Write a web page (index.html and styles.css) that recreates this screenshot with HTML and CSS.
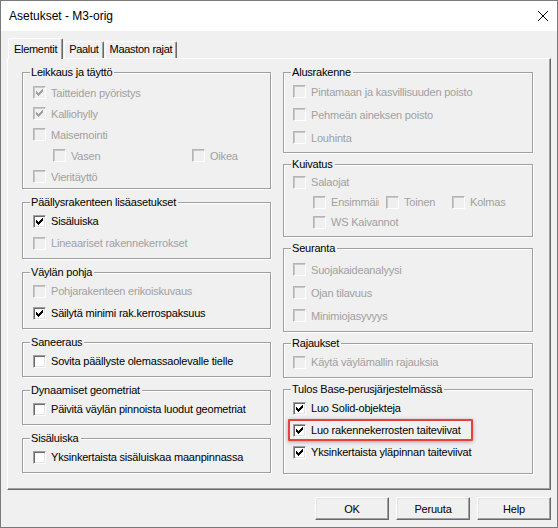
FILE: index.html
```html
<!DOCTYPE html>
<html lang="fi">
<head>
  <meta charset="UTF-8" />
  <title>Asetukset - M3-orig</title>
  <link rel="stylesheet" href="styles.css">
</head>
<body>

  <div class="window">

    <!-- Title bar -->
    <div class="titlebar">
      <span class="title">Asetukset - M3-orig</span>
      <svg class="close" viewBox="0 0 10 10"><path d="M0 0L10 10M10 0L0 10" /></svg>
    </div>

    <div class="content">

      <!-- Tabs -->
      <div class="tabs">
        <div class="tab on">Elementit</div>
        <div class="tab">Paalut</div>
        <div class="tab">Maaston rajat</div>
      </div>

      <div class="panel">

        <!-- Left column -->
        <div class="col col-left">

          <div class="group g-cut">
            <span class="legend">Leikkaus ja täyttö</span>
            <div class="row"><span class="check off checked"><span class="box"><svg viewBox="0 0 7 7"><path d="M6 0h1v1h-1zM5 1h2v1h-2zM0 2h1v1h-1zM4 2h3v1h-3zM0 3h2v1h-2zM3 3h3v1h-3zM0 4h5v1h-5zM1 5h3v1h-3zM2 6h1v1h-1z"/></svg></span>Taitteiden pyöristys</span></div>
            <div class="row"><span class="check off checked"><span class="box"><svg viewBox="0 0 7 7"><path d="M6 0h1v1h-1zM5 1h2v1h-2zM0 2h1v1h-1zM4 2h3v1h-3zM0 3h2v1h-2zM3 3h3v1h-3zM0 4h5v1h-5zM1 5h3v1h-3zM2 6h1v1h-1z"/></svg></span>Kalliohylly</span></div>
            <div class="row"><span class="check off"><span class="box"></span>Maisemointi</span></div>
            <div class="row split pair">
              <span class="check off"><span class="box"></span>Vasen</span>
              <span class="check off"><span class="box"></span>Oikea</span>
            </div>
            <div class="row"><span class="check off"><span class="box"></span>Vieritäyttö</span></div>
          </div>

          <div class="group">
            <span class="legend">Päällysrakenteen lisäasetukset</span>
            <div class="row"><span class="check checked"><span class="box"><svg viewBox="0 0 7 7"><path d="M6 0h1v1h-1zM5 1h2v1h-2zM0 2h1v1h-1zM4 2h3v1h-3zM0 3h2v1h-2zM3 3h3v1h-3zM0 4h5v1h-5zM1 5h3v1h-3zM2 6h1v1h-1z"/></svg></span>Sisäluiska</span></div>
            <div class="row"><span class="check off"><span class="box"></span>Lineaariset rakennekerrokset</span></div>
          </div>

          <div class="group">
            <span class="legend">Väylän pohja</span>
            <div class="row"><span class="check off"><span class="box"></span>Pohjarakenteen erikoiskuvaus</span></div>
            <div class="row"><span class="check checked"><span class="box"><svg viewBox="0 0 7 7"><path d="M6 0h1v1h-1zM5 1h2v1h-2zM0 2h1v1h-1zM4 2h3v1h-3zM0 3h2v1h-2zM3 3h3v1h-3zM0 4h5v1h-5zM1 5h3v1h-3zM2 6h1v1h-1z"/></svg></span>Säilytä minimi rak.kerrospaksuus</span></div>
          </div>

          <div class="group">
            <span class="legend">Saneeraus</span>
            <div class="row"><span class="check"><span class="box"></span>Sovita päällyste olemassaolevalle tielle</span></div>
          </div>

          <div class="group">
            <span class="legend">Dynaamiset geometriat</span>
            <div class="row"><span class="check"><span class="box"></span>Päivitä väylän pinnoista luodut geometriat</span></div>
          </div>

          <div class="group">
            <span class="legend">Sisäluiska</span>
            <div class="row"><span class="check"><span class="box"></span>Yksinkertaista sisäluiskaa maanpinnassa</span></div>
          </div>

        </div>

        <!-- Right column -->
        <div class="col col-right">

          <div class="group g-base">
            <span class="legend">Alusrakenne</span>
            <div class="row"><span class="check off"><span class="box"></span>Pintamaan ja kasvillisuuden poisto</span></div>
            <div class="row"><span class="check off"><span class="box"></span>Pehmeän aineksen poisto</span></div>
            <div class="row"><span class="check off"><span class="box"></span>Louhinta</span></div>
          </div>

          <div class="group g-drain">
            <span class="legend">Kuivatus</span>
            <div class="row"><span class="check off"><span class="box"></span>Salaojat</span></div>
            <div class="row split trio">
              <span class="check off"><span class="box"></span><span class="clip">Ensimmäinen</span></span>
              <span class="check off"><span class="box"></span>Toinen</span>
              <span class="check off"><span class="box"></span>Kolmas</span>
            </div>
            <div class="row split"><span class="check off"><span class="box"></span>WS Kaivannot</span></div>
          </div>

          <div class="group g-watch">
            <span class="legend">Seuranta</span>
            <div class="row"><span class="check off"><span class="box"></span>Suojakaideanalyysi</span></div>
            <div class="row"><span class="check off"><span class="box"></span>Ojan tilavuus</span></div>
            <div class="row"><span class="check off"><span class="box"></span>Minimiojasyvyys</span></div>
          </div>

          <div class="group">
            <span class="legend">Rajaukset</span>
            <div class="row"><span class="check off"><span class="box"></span>Käytä väylämallin rajauksia</span></div>
          </div>

          <div class="group g-out">
            <span class="legend">Tulos Base-perusjärjestelmässä</span>
            <div class="row"><span class="check checked"><span class="box"><svg viewBox="0 0 7 7"><path d="M6 0h1v1h-1zM5 1h2v1h-2zM0 2h1v1h-1zM4 2h3v1h-3zM0 3h2v1h-2zM3 3h3v1h-3zM0 4h5v1h-5zM1 5h3v1h-3zM2 6h1v1h-1z"/></svg></span>Luo Solid-objekteja</span></div>
            <div class="row marked">
              <span class="check checked"><span class="box"><svg viewBox="0 0 7 7"><path d="M6 0h1v1h-1zM5 1h2v1h-2zM0 2h1v1h-1zM4 2h3v1h-3zM0 3h2v1h-2zM3 3h3v1h-3zM0 4h5v1h-5zM1 5h3v1h-3zM2 6h1v1h-1z"/></svg></span>Luo rakennekerrosten taiteviivat</span>
              <span class="highlight"></span>
            </div>
            <div class="row"><span class="check checked"><span class="box"><svg viewBox="0 0 7 7"><path d="M6 0h1v1h-1zM5 1h2v1h-2zM0 2h1v1h-1zM4 2h3v1h-3zM0 3h2v1h-2zM3 3h3v1h-3zM0 4h5v1h-5zM1 5h3v1h-3zM2 6h1v1h-1z"/></svg></span>Yksinkertaista yläpinnan taiteviivat</span></div>
          </div>

        </div>
      </div>

      <!-- Dialog buttons -->
      <div class="buttons">
        <button class="btn">OK</button>
        <button class="btn">Peruuta</button>
        <button class="btn">Help</button>
      </div>

    </div>
  </div>

</body>
</html>
```

FILE: styles.css
```css
body {
  margin: 0;
  font-family: "Liberation Sans", Arial, sans-serif;
  font-size: 11px;
  letter-spacing: -0.2px;
  color: #000;
  background: #fff;
}
.window {
  width: 558px;
  height: 528px;
  box-sizing: border-box;
  border: 1px solid #7a7a7a;
  background: #f0f0f0;
}
.titlebar {
  height: 30px;
  background: #fff;
  display: flex;
  align-items: center;
  justify-content: space-between;
  padding: 0 9px 0 8px;
}
.title {
  font-size: 12px;
  letter-spacing: 0;
}
.close {
  width: 10px;
  height: 10px;
  stroke: #000;
  stroke-width: 1;
  fill: none;
}
.content {
  padding: 7px 6px 0;
}

/* Tabs */
.tabs {
  display: flex;
  align-items: flex-end;
  height: 20px;
  padding-left: 1px;
}
.tab {
  height: 17px;
  box-sizing: border-box;
  padding: 0 4px;
  line-height: 15px;
  letter-spacing: -0.3px;
  border: 1px solid;
  border-bottom: 0;
  border-color: #fff #696969 transparent #fff;
  border-radius: 2px 2px 0 0;
  box-shadow: inset -1px 0 0 #a0a0a0;
  margin-left: 1px;
  white-space: nowrap;
}
.tab.on {
  height: 21px;
  margin: 0 0 -1px 0;
  padding: 3px 5px 0;
  position: relative;
  z-index: 1;
  background: #f0f0f0;
}

/* Tab page */
.panel {
  height: 432px;
  box-sizing: border-box;
  border: 1px solid;
  border-color: #fff #696969 #696969 #fff;
  box-shadow: inset -1px -1px 0 #a0a0a0;
  padding: 13px 17px 0 14px;
  display: flex;
  gap: 12px;
}
.col {
  display: flex;
  flex-direction: column;
}
.col-left {
  width: 249px;
  gap: 13px;
}
.col-right {
  width: 250px;
  gap: 11px;
}

/* Group boxes */
.group {
  --row: 22px;
  position: relative;
  border: 1px solid #a0a0a0;
  box-shadow: inset 1px 1px 0 #fff, 1px 1px 0 #fff;
  padding: 7px 0 4px 10px;
}
.col-right .group {
  padding-left: 9px;
}
.legend {
  position: absolute;
  top: -7px;
  left: 7px;
  line-height: 13px;
  padding: 0 2px 0 1px;
  background: #f0f0f0;
  white-space: nowrap;
}
.g-cut {
  --row: 21px;
  padding-top: 9px;
  padding-bottom: 1px;
}
.col-right .g-base {
  --row: 23px;
  padding-bottom: 3px;
}
.col-right .g-drain {
  --row: 20px;
}
.col-right .g-watch {
  --row: 23px;
  padding-top: 9px;
}
.col-right .g-out {
  padding-bottom: 10px;
}

/* Checkbox rows */
.row {
  display: flex;
  align-items: center;
  height: var(--row);
}
.row.split {
  padding-left: 20px;
}
.row.pair {
  display: grid;
  grid-template-columns: 139px auto;
  align-items: center;
}
.row.trio {
  display: grid;
  grid-template-columns: 73px 66px auto;
  align-items: center;
}
.check {
  display: flex;
  align-items: center;
  white-space: nowrap;
}
.box {
  flex: none;
  width: 13px;
  height: 13px;
  box-sizing: border-box;
  border: 1px solid;
  border-color: #a0a0a0 #fff #fff #a0a0a0;
  box-shadow: inset 1px 1px 0 #696969, inset -1px -1px 0 #e3e3e3;
  background: #fff;
  margin-right: 5px;
  display: flex;
  align-items: center;
  justify-content: center;
  color: #000;
}
.box svg {
  width: 7px;
  height: 7px;
  fill: currentColor;
  shape-rendering: crispEdges;
}
.check.off {
  color: #a0a0a0;
}
.check.off .box {
  background: #f0f0f0;
  border-color: #b4b4b4 #fff #fff #b4b4b4;
  box-shadow: inset 1px 1px 0 #c8c8c8;
  color: #a0a0a0;
}
.clip {
  width: 48px;
  overflow: hidden;
}

/* Annotation around one option */
.row.marked {
  position: relative;
}
.highlight {
  position: absolute;
  left: -5px;
  top: 0;
  width: 185px;
  height: 22px;
  box-sizing: border-box;
  border: 2px solid #e8413c;
  border-radius: 1px;
  box-shadow: 0 1px 4px rgba(0,0,0,0.3);
}

/* Buttons */
.buttons {
  display: flex;
  justify-content: flex-end;
  gap: 7px;
  padding-top: 7px;
}
.btn {
  width: 74px;
  height: 23px;
  padding: 0;
  font: inherit;
  letter-spacing: inherit;
  color: #000;
  background: #f0f0f0;
  border: 1px solid;
  border-color: #fff #696969 #696969 #fff;
  box-shadow: inset -1px -1px 0 #a0a0a0, inset 1px 1px 0 #e3e3e3;
}
```
